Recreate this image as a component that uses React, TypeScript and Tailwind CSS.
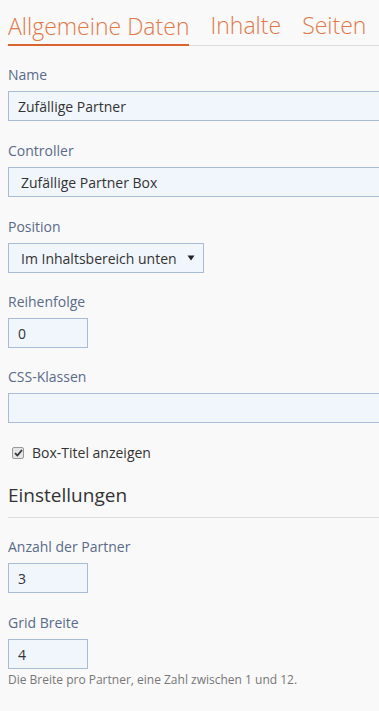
const Label = ({ children }: { children: React.ReactNode }) => (
  <label className="block h-5 text-[14px] leading-5 text-[#5a6b8a]">{children}</label>
);

const Field = ({
  label,
  value,
  width,
  pad = 'pl-[9px]',
  mb = 'mb-[20px]',
}: {
  label: string;
  value: string;
  width: string;
  pad?: string;
  mb?: string;
}) => (
  <div className={mb}>
    <Label>{label}</Label>
    <div
      className={`mt-[6px] flex h-[30px] items-center border border-[#a9bcd5] bg-[#f1f6fc] text-[14px] text-[#333] ${width} ${pad}`}
    >
      {value}
    </div>
  </div>
);

const App = () => (
  <main
    className="min-h-[711px] overflow-hidden bg-[#f9f9f9] pl-2"
    style={{ fontFamily: '"Open Sans", sans-serif' }}
  >
    <nav className="flex h-[46px] items-end border-b border-[#dcdcdc] font-light">
      <span className="-mb-px border-b-2 border-[#d9642f] pb-[3px] text-[23px] leading-[30px] text-[#e07848]">
        Allgemeine Daten
      </span>
      <span className="ml-[21px] pb-[5px] text-[23px] leading-[30px] text-[#e07848]">Inhalte</span>
      <span className="ml-[21px] pb-[5px] text-[23px] leading-[30px] text-[#e07848]">Seiten</span>
    </nav>

    <div className="pt-[19px]">
      <Field label="Name" value="Zufällige Partner" width="w-[400px]" />
      <Field label="Controller" value="Zufällige Partner Box" width="w-[400px]" pad="pl-[12px]" />

      <div className="mb-[19px]">
        <Label>Position</Label>
        <div className="mt-[6px] flex h-[30px] w-[196px] items-center justify-between border border-[#a9bcd5] bg-[#f1f6fc] pr-[8px] pl-[12px] text-[14px] text-[#333]">
          <span>Im Inhaltsbereich unten</span>
          <svg width="8" height="6" viewBox="0 0 8 6">
            <path d="M0.5 0.5 L7.5 0.5 L4 5.5 Z" fill="#222" />
          </svg>
        </div>
      </div>

      <Field label="Reihenfolge" value="0" width="w-[80px]" mb="mb-[19px]" />
      <Field label="CSS-Klassen" value="" width="w-[400px]" mb="mb-[19px]" />

      <div className="mt-[4px] flex items-center gap-[8px] pl-[4px] text-[14px] text-[#333]">
        <span className="flex h-[12px] w-[12px] items-center justify-center rounded-[2px] border border-[#9a9a9a] bg-[#e6e6e6]">
          <svg width="9" height="8" viewBox="0 0 9 8">
            <path d="M1 4.2 L3.4 6.5 L8 1" stroke="#333" strokeWidth="1.8" fill="none" />
          </svg>
        </span>
        <span>Box-Titel anzeigen</span>
      </div>

      <h2 className="mt-[19px] border-b border-[#dedede] pb-[9px] text-[19px] leading-[26px] text-[#333]">
        Einstellungen
      </h2>

      <div className="pt-[19px]">
        <Field label="Anzahl der Partner" value="3" width="w-[80px]" />
        <div>
          <Label>Grid Breite</Label>
          <div className="mt-[6px] flex h-[30px] w-[80px] items-center border border-[#a9bcd5] bg-[#f1f6fc] pl-[9px] text-[14px] text-[#333]">
            4
          </div>
          <p className="mt-[3px] text-[12px] leading-4 text-[#777]">
            Die Breite pro Partner, eine Zahl zwischen 1 und 12.
          </p>
        </div>
      </div>
    </div>
  </main>
);

export default App;
